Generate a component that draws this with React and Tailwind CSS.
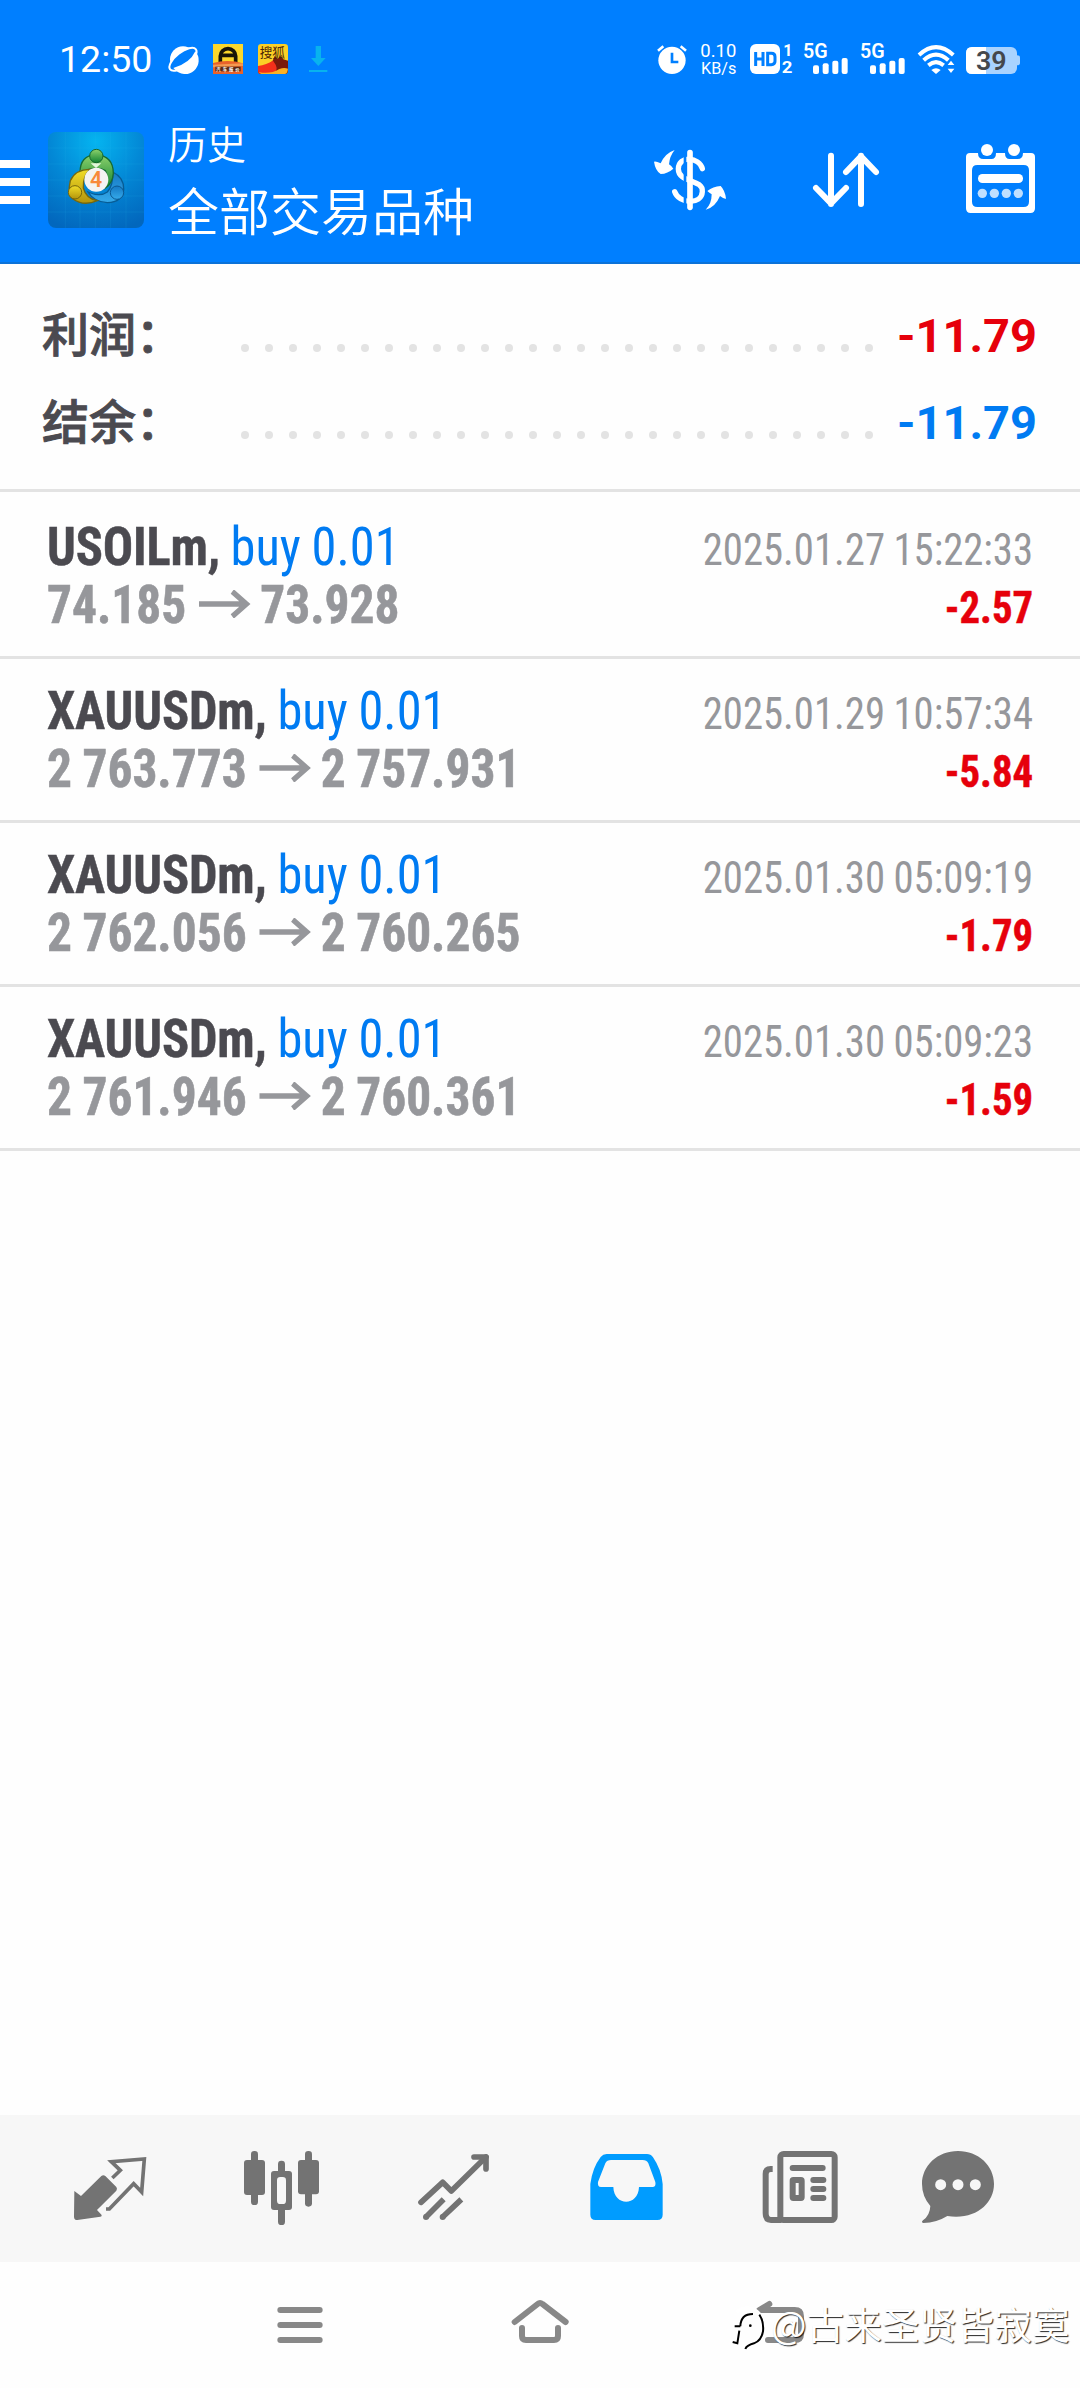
import clsx from 'clsx';

const SUMMARY = [
    { label: '利润：', value: '-11.79', color: 'text-[#e6000b]' },
    { label: '结余：', value: '-11.79', color: 'text-[#007bf2]' },
];

const DEALS = [
    { symbol: 'USOILm,', side: 'buy 0.01', open: '74.185', close: '73.928', time: '2025.01.27 15:22:33', profit: '-2.57' },
    { symbol: 'XAUUSDm,', side: 'buy 0.01', open: '2 763.773', close: '2 757.931', time: '2025.01.29 10:57:34', profit: '-5.84' },
    { symbol: 'XAUUSDm,', side: 'buy 0.01', open: '2 762.056', close: '2 760.265', time: '2025.01.30 05:09:19', profit: '-1.79' },
    { symbol: 'XAUUSDm,', side: 'buy 0.01', open: '2 761.946', close: '2 760.361', time: '2025.01.30 05:09:23', profit: '-1.59' },
];

function Signal() {
    return (
        <svg className="w-[57px] h-[80px]" viewBox="480 0 171 240" fill="#fff">
            <text x="489" y="115" fontSize="60" fontWeight="600" textLength="74" lengthAdjust="spacingAndGlyphs" className="font-['Roboto']">5G</text>
            <rect x="519" y="136" width="18" height="26" rx="6" />
            <rect x="548" y="130" width="18" height="32" rx="6" />
            <rect x="577" y="122" width="18" height="40" rx="6" />
            <rect x="605" y="114" width="18" height="48" rx="6" />
        </svg>
    );
}

function StatusBar() {
    return (
        <div className="flex h-[80px] text-white">
            <div className="w-[98px] ml-[59px] mr-px text-[37.500px] leading-[79px] font-['Roboto'] whitespace-nowrap">12:50</div>
            {/* Browser */}
            <svg className="w-[50px] h-[80px]" viewBox="474 0 150 240">
                <circle cx="549" cy="118" r="39" fill="#fff" />
                <ellipse cx="549" cy="118" rx="49" ry="21" transform="rotate(-38 549 118)" fill="#007fff" stroke="#fff" strokeWidth="6" />
                <path d="M520 144 Q570 130 586 94 A39 39 0 0 1 524 148Z" fill="#fff" />
            </svg>
            {/* Car app */}
            <svg className="w-[45px] h-[80px]" viewBox="624 0 135 240">
                <rect x="639" y="72" width="90" height="90" fill="#fbd72b" />
                <path d="M661 128 V108 a23 22 0 0 1 46 0 V128 M662 106 H706" fill="none" stroke="#191508" strokeWidth="11" />
                <path d="M639 129 Q684 116 729 130 V162 H639Z" fill="#e8622a" />
                <path d="M639 134 L729 130 V138 L639 142Z" fill="#f49a50" />
                <rect x="646" y="140" width="76" height="14" fill="#5b2a16" />
                <text x="649" y="152" fontSize="13" fontWeight="700" fill="#fff" textLength="70" className="font-['Noto_Sans_CJK_SC',sans-serif]">汽车报价</text>
            </svg>
            {/* Sohu */}
            <svg className="w-[45px] h-[80px]" viewBox="759 0 135 240">
                <rect x="774" y="72" width="90" height="90" rx="10" fill="#fbd026" />
                <path d="M774 140 Q800 142 818 122 L824 108 L833 116 L842 108 L850 118 L864 122 V152 Q864 162 854 162 H784 Q774 162 774 152Z" fill="#7a1a0c" />
                <path d="M774 138 Q800 134 819 122 Q840 148 822 162 H784 Q774 162 774 152Z" fill="#f4301b" />
                <path d="M776 156 Q810 164 838 147 Q852 142 864 146 Q862 162 854 162 H784Z" fill="#fbb124" />
                <text x="779" y="112" fontSize="38" fill="#4c2608" className="font-['Noto_Sans_CJK_SC',sans-serif]">搜狐</text>
            </svg>
            {/* Download */}
            <svg className="w-[45px] h-[80px]" viewBox="894 0 135 240" fill="#08b3ee">
                <path d="M947 78 H963 V114 H977 L955 138 L933 114 H947Z" />
                <rect x="927" y="150" width="55" height="6" />
            </svg>

            {/* Alarm */}
            <svg className="w-[46px] h-[80px] ml-[304px]" viewBox="21 0 138 240">
                <circle cx="96" cy="121" r="41" fill="#fff" />
                <path d="M96 98 V126 H115" fill="none" stroke="#007fff" strokeWidth="8" />
                <path d="M54 92 L70 79 M122 79 L138 92" stroke="#fff" strokeWidth="8" />
            </svg>
            <svg className="w-[50px] h-[80px]" viewBox="159 0 150 240" fill="#fff">
                <text x="181" y="112" fontSize="53" textLength="108" lengthAdjust="spacingAndGlyphs" className="font-['Roboto']">0.10</text>
                <text x="183" y="162" fontSize="49" textLength="106" lengthAdjust="spacingAndGlyphs" className="font-['Roboto']">KB/s</text>
            </svg>
            {/* HD calls on both SIMs */}
            <svg className="w-[57px] h-[80px]" viewBox="309 0 171 240">
                <rect x="330" y="72" width="90" height="90" rx="18" fill="#fff" />
                <path d="M347 96 V138 M369 96 V138 M347 117 H369 M383 100 H394 Q405 100 405 110 V124 Q405 134 394 134 H383Z" fill="none" stroke="#007fff" strokeWidth="9" />
                <text x="430" y="107" fontSize="48" fontWeight="700" fill="#fff" className="font-['Roboto']">1</text>
                <text x="425" y="159" fontSize="50" fontWeight="700" fill="#fff" textLength="32" lengthAdjust="spacingAndGlyphs" className="font-['Roboto']">2</text>
            </svg>
            <Signal />
            <Signal />
            {/* Wifi */}
            <svg className="w-[46px] h-[80px]" viewBox="822 0 138 240" fill="none" stroke="#fff" strokeWidth="12">
                <path d="M837 105 Q888 58 940 105" />
                <path d="M851 121 Q888 87 925 121" />
                <path d="M865 136 Q888 117 911 136" />
                <path d="M874 150 Q888 139 902 150 L888 162Z" fill="#fff" stroke="none" />
                <path d="M933 122 L943 135 H923Z M933 159 L943 146 H923Z" fill="#fff" stroke="none" />
            </svg>
            {/* Battery */}
            <svg className="w-[66px] h-[80px]" viewBox="960 0 198 240">
                <rect x="978" y="81" width="153" height="81" rx="18" fill="#a9d3ff" />
                <path d="M996 81 H1038 V162 H996 Q978 162 978 144 V99 Q978 81 996 81Z" fill="#fff" />
                <path d="M1131 106 Q1140 106 1140 113 V129 Q1140 136 1131 136Z" fill="#a9d3ff" />
                <text x="1008" y="149" fontSize="76" fontWeight="600" fill="#45484d" textLength="92" lengthAdjust="spacingAndGlyphs" className="font-['Roboto']">39</text>
            </svg>
        </div>
    );
}

function Logo() {
    return (
        <svg className="w-[96px] h-[96px] ml-[18px] mt-[22px] shrink-0" viewBox="144 66 288 288">
            <defs>
                <radialGradient id="sky" cx="0.5" cy="0.1" r="0.95">
                    <stop offset="0" stopColor="#05b4f0" />
                    <stop offset="0.5" stopColor="#0388d6" />
                    <stop offset="1" stopColor="#0267bd" />
                </radialGradient>
                <linearGradient id="green" x2="0" y2="1"><stop stopColor="#8ed26c" /><stop offset="1" stopColor="#128433" /></linearGradient>
                <linearGradient id="yellow" x2="0" y2="1"><stop stopColor="#f2dd28" /><stop offset="1" stopColor="#b3940c" /></linearGradient>
                <linearGradient id="blue" x2="0" y2="1"><stop stopColor="#1579c4" /><stop offset="1" stopColor="#35aaea" /></linearGradient>
            </defs>
            <rect x="144" y="66" width="288" height="288" rx="24" fill="url(#sky)" />
            <path d="M196 66V354 M240 66V354 M286 66V354 M332 66V354 M378 66V354 M144 114H432 M144 162H432 M144 210H432 M144 258H432 M144 306H432" stroke="#36b6f2" strokeOpacity="0.2" strokeWidth="2" />
            <path d="M338 186 Q372 202 371 238 Q368 276 322 278 Q282 276 264 246 Q300 262 322 246 Q340 226 338 186Z" fill="url(#blue)" stroke="#075c95" strokeWidth="4" />
            <path d="M240 188 Q240 136 288 134 Q340 138 340 190 Q338 220 316 234 Q328 206 316 182 Q290 166 240 188Z" fill="url(#green)" stroke="#176b32" strokeWidth="4" />
            <path d="M270 178 Q226 178 211 212 Q202 250 218 266 Q250 290 292 272 Q258 266 250 234 Q248 200 270 178Z" fill="url(#yellow)" stroke="#736710" strokeWidth="4" />
            <path d="M272 160 L288 174 L304 160Z" fill="#e4f7dc" />
            <circle cx="289" cy="138" r="20" fill="url(#green)" stroke="#14662b" strokeWidth="3" />
            <circle cx="225" cy="247" r="20" fill="url(#yellow)" stroke="#75650b" strokeWidth="3" />
            <circle cx="351" cy="248" r="20" fill="url(#blue)" stroke="#0b5790" strokeWidth="3" />
            <circle cx="289" cy="209" r="36" fill="#f4f3f2" />
            <text x="288" y="231" fontSize="64" fontWeight="600" textAnchor="middle" fill="#f8893a" className="font-['Roboto']">4</text>
        </svg>
    );
}

function Header() {
    return (
        <div className="flex h-[153px]">
            <svg className="w-[30px] h-[44px] mt-[50px] shrink-0" viewBox="0 0 30 44" fill="#fff">
                <rect width="30" height="8" />
                <rect y="18" width="30" height="8" />
                <rect y="36" width="30" height="8" />
            </svg>
            <Logo />
            <div className="w-[440px] ml-[24px] mt-[9px] text-white font-[350] font-['Noto_Sans_CJK_SC',sans-serif] whitespace-nowrap">
                <div className="text-[39px] leading-[47px]">历史</div>
                <div className="mt-[13px] text-[51px] leading-[60px]">全部交易品种</div>
            </div>
            {/* Deals with the money flow */}
            <svg className="w-[84px] h-[80px] mt-[30px] ml-[40px]" viewBox="84 60 252 240">
                <path d="M247 146 C239 112 175 104 175 147 C175 190 250 176 247 215 C245 256 176 252 164 215" fill="none" stroke="#fff" strokeWidth="16" strokeLinecap="round" />
                <path d="M195 80 V280" stroke="#007fff" strokeWidth="8" />
                <path d="M210 98 V262" stroke="#fff" strokeWidth="17" strokeLinecap="round" />
                <path d="M164 90 Q149 108 147 133 Q154 137 160 146 Q143 161 122 162 Q106 152 102 125 Q108 123 122 130 Q136 99 164 90Z" fill="#fff" />
                <path d="M257 269 Q275 252 275 223 Q268 219 262 213 Q279 199 302 198 Q315 211 318 236 Q313 238 300 228 Q286 262 257 269Z" fill="#fff" />
            </svg>
            <svg className="w-[84px] h-[80px] mt-[30px] ml-[72px]" viewBox="552 60 252 240" fill="none" stroke="#fff" strokeWidth="18" strokeLinecap="round" strokeLinejoin="round">
                <path d="M633 107 V252 M588 204 L633 250 L678 204" />
                <path d="M723 252 V107 M678 156 L723 109 L768 156" />
            </svg>
            <svg className="w-[84px] h-[80px] mt-[30px] ml-[69px]" viewBox="1011 60 252 240">
                <path fillRule="evenodd" fill="#fff" d="M1050 99 H1074 Q1074 117 1090 117 H1114 Q1128 117 1128 99 H1155 Q1155 117 1169 117 H1193 Q1209 117 1209 99 H1233 Q1245 99 1245 111 V265 Q1245 279 1231 279 H1052 Q1038 279 1038 265 V111 Q1038 99 1050 99Z M1072 135 Q1056 135 1056 151 V245 Q1056 261 1072 261 H1211 Q1227 261 1227 245 V151 Q1227 135 1211 135Z" />
                <circle cx="1101" cy="90" r="18" fill="#fff" />
                <circle cx="1182" cy="90" r="18" fill="#fff" />
                <rect x="1074" y="162" width="135" height="27" rx="13" fill="#fff" />
                <g fill="#bfdfff">
                    <circle cx="1087" cy="220" r="14" />
                    <circle cx="1123" cy="220" r="14" />
                    <circle cx="1159" cy="220" r="14" />
                    <circle cx="1195" cy="220" r="14" />
                </g>
            </svg>
        </div>
    );
}

function SummaryRow({ label, value, color }) {
    return (
        <div className="flex items-center h-[87px]">
            <div className="w-[241px] pl-[42px] pb-[8px] text-[47px] leading-[60px] font-medium [-webkit-text-stroke:0.9px_#4b4a50] text-[#4b4a50] font-['Noto_Sans_CJK_SC',sans-serif] whitespace-nowrap">{label}</div>
            <div className="flex justify-between w-[632px] mt-[25px]">
                {Array.from({ length: 27 }, (_, i) => (
                    <span key={i} className="w-[8px] h-[8px] rounded-full bg-[#e3e3e3]"></span>
                ))}
            </div>
            <div className={clsx("flex-1 pr-[43px] text-right text-[47px] leading-[60px] font-bold font-['Roboto']", color)}>{value}</div>
        </div>
    );
}

function DealRow({ deal }) {
    return (
        <div className="flex justify-between h-[164px] px-[47px] border-b-[3px] border-[#e3e3e3] font-['Roboto'] [font-stretch:75%] [word-spacing:-1px] whitespace-nowrap">
            <div className="pt-[23px] text-[54px] leading-[58px] font-bold">
                <div className="origin-left scale-x-[0.935] text-[#4b4a50]">
                    <span className="tracking-[-0.2px] [-webkit-text-stroke:0.5px_#4b4a50]">{deal.symbol}</span> <span className="font-normal text-[#007bf2]">{deal.side}</span>
                </div>
                <div className="flex origin-left scale-x-[0.915] text-[#96979b] [-webkit-text-stroke:0.6px_#96979b]">
                    {deal.open}
                    <svg className="w-[57px] h-[28px] mt-[14px] ml-[14px] mr-[10px]" viewBox="0 0 57 28" fill="none" stroke="currentColor" strokeWidth="5.500">
                        <path d="M0 14 H53 M36.500 1.500 L52 14 L36.500 26.500" />
                    </svg>
                    {deal.close}
                </div>
            </div>
            <div className="pt-[26px] text-[45px] leading-[58px] text-right origin-right scale-x-[0.905]">
                <div className="text-[#96979b]">{deal.time}</div>
                <div className="font-bold text-[#e6000b] [-webkit-text-stroke:0.5px_#e6000b]">{deal.profit}</div>
            </div>
        </div>
    );
}

function TabBar() {
    return (
        <div className="flex h-[147px] pl-[24px] bg-[#f7f7f7]">
            {/* Quotes */}
            <svg className="w-[172px] h-[147px]" viewBox="-48 15 516 441" fill="#737373">
                <path d="M103 243 L123 258 L184 198 Q190 193 196 198 L229 231 Q233 236 229 242 L171 300 L185 315 Q186 320 181 320 L112 330 Q102 330 102 320Z" />
                <path d="M198 297 H208 L281 221 L305 246 L313 147 L214 155 L241 181 L217 204" fill="none" stroke="#737373" strokeWidth="11" />
            </svg>
            {/* Charts */}
            <svg className="w-[172px] h-[147px]" viewBox="468 15 516 441" fill="#737373">
                <rect x="633" y="123" width="21" height="162" rx="10" />
                <rect x="612" y="150" width="63" height="105" rx="9" />
                <rect x="714" y="152" width="21" height="193" rx="10" />
                <rect x="693" y="183" width="63" height="117" rx="9" />
                <rect x="711" y="201" width="27" height="81" rx="10" fill="#f7f7f7" />
                <rect x="795" y="123" width="21" height="167" rx="10" />
                <rect x="774" y="150" width="63" height="103" rx="9" />
            </svg>
            {/* Trade */}
            <svg className="w-[172px] h-[147px]" viewBox="984 15 516 441" fill="none" stroke="#737373" strokeWidth="17">
                <path d="M1143 277 L1208 217 L1234 243 L1338 141" strokeLinecap="round" strokeLinejoin="round" />
                <path d="M1302 141 H1338 V177" strokeLinecap="round" strokeLinejoin="round" />
                <path d="M1211 268 L1158 321 M1264 268 L1208 321" />
                <circle cx="1158" cy="321" r="9" fill="#737373" stroke="none" />
                <circle cx="1208" cy="321" r="9" fill="#737373" stroke="none" />
            </svg>
            {/* History */}
            <svg className="w-[172px] h-[147px]" viewBox="0 15 516 441">
                <path fillRule="evenodd" fill="#009cff" d="M200 132 H321 Q332 132 339 142 Q364 178 368 222 V314 Q368 330 352 330 H167 Q151 330 151 314 V222 Q157 174 182 141 Q189 132 200 132Z M213 150 Q201 150 196 160 L174 216 Q172 231 183 231 H220 C222 290 295 290 297 231 H337 Q349 231 346 216 L325 160 Q320 150 308 150Z" />
            </svg>
            {/* News */}
            <svg className="w-[172px] h-[147px]" viewBox="516 15 516 441" fill="none" stroke="#737373" strokeWidth="18">
                <rect x="721" y="132" width="163" height="198" rx="10" />
                <path d="M698 177 H692 Q677 177 677 192 V310 Q677 330 693 330 H724" />
                <path d="M758 174 H848 M820 210 H850 M820 237 H850 M820 264 H850" strokeLinecap="round" />
                <rect x="758" y="210" width="27" height="54" rx="2" />
            </svg>
            {/* Messages */}
            <svg className="w-[172px] h-[147px]" viewBox="1032 15 516 441">
                <path fill="#737373" d="M1254 123 C1315 123 1362 167 1362 222 C1362 281 1306 331 1222 318 Q1190 338 1150 339 Q1142 337 1149 331 Q1170 316 1171 288 Q1146 259 1146 222 C1146 167 1193 123 1254 123Z" />
                <circle cx="1202" cy="224" r="16.500" fill="#f7f7f7" />
                <circle cx="1254" cy="224" r="16.500" fill="#f7f7f7" />
                <circle cx="1306" cy="224" r="16.500" fill="#f7f7f7" />
            </svg>
        </div>
    );
}

function SystemNav() {
    return (
        <div className="flex h-[126px] pl-[180px]">
            <svg className="w-[240px] h-[126px]" viewBox="-180 -24 720 378" stroke="#888" strokeWidth="18" strokeLinecap="round">
                <path d="M121 120 H239 M121 165 H239 M121 210 H239" />
            </svg>
            <svg className="w-[240px] h-[126px]" viewBox="540 -24 720 378" fill="none" stroke="#888" strokeWidth="18" strokeLinecap="round">
                <path d="M824 156 L893 102 Q900 96 907 102 L977 156" />
                <path d="M846 174 V198 Q846 210 858 210 H942 Q954 210 954 198 V174" />
            </svg>
            <svg className="w-[240px] h-[126px]" viewBox="-120 -24 720 378" fill="none" stroke="#888" strokeWidth="18" strokeLinecap="round" strokeLinejoin="round">
                <path d="M208 102 L178 120 H284 Q303 120 303 139 V191 Q303 210 284 210 H204" />
            </svg>
        </div>
    );
}

function Watermark() {
    return (
        <div className="absolute left-[729px] bottom-[30px] flex items-center h-[60px]">
            <svg className="w-[42px] h-[60px]" viewBox="87 90 126 180" fill="none">
                <path d="M112 134 Q114 124 140 120 Q190 124 188 180 Q186 222 132 238 V222 M98 164 H118 M92 216 L110 224 L120 184" stroke="#fff" strokeWidth="11" />
                <path d="M121 175 Q122 138 159 138 M104 175 H121 M118 188 L112 226 L98 222" stroke="#000" strokeWidth="6" />
                <path d="M178 140 Q192 160 189 190 Q184 218 162 226 Q140 232 136 243" stroke="#000" strokeWidth="6" />
                <circle cx="151" cy="173" r="4" fill="#000" />
            </svg>
            <span className="pb-[10px] text-[37.600px] leading-[60px] text-white [text-shadow:1px_1px_1px_rgba(0,0,0,0.85)] font-['Noto_Sans_CJK_SC',sans-serif] whitespace-nowrap">@古来圣贤皆寂寞</span>
        </div>
    );
}

export default function App() {
    return (
        <div className="relative flex flex-col w-[1080px] h-[2388px] bg-[#fefefe] overflow-hidden">
            <div className="flex flex-col gap-[10px] h-[264px] pt-[20px] bg-[#007fff] border-b-2 border-[#0b72d8]">
                <StatusBar />
                <Header />
            </div>
            <div className="h-[228px] pt-[28px] border-b-[3px] border-[#e3e3e3]">
                {SUMMARY.map((row) => (
                    <SummaryRow key={row.label} {...row} />
                ))}
            </div>
            <div className="flex-1 pt-[3px]">
                {DEALS.map((deal) => (
                    <DealRow key={deal.time} deal={deal} />
                ))}
            </div>
            <TabBar />
            <SystemNav />
            <Watermark />
        </div>
    );
}
